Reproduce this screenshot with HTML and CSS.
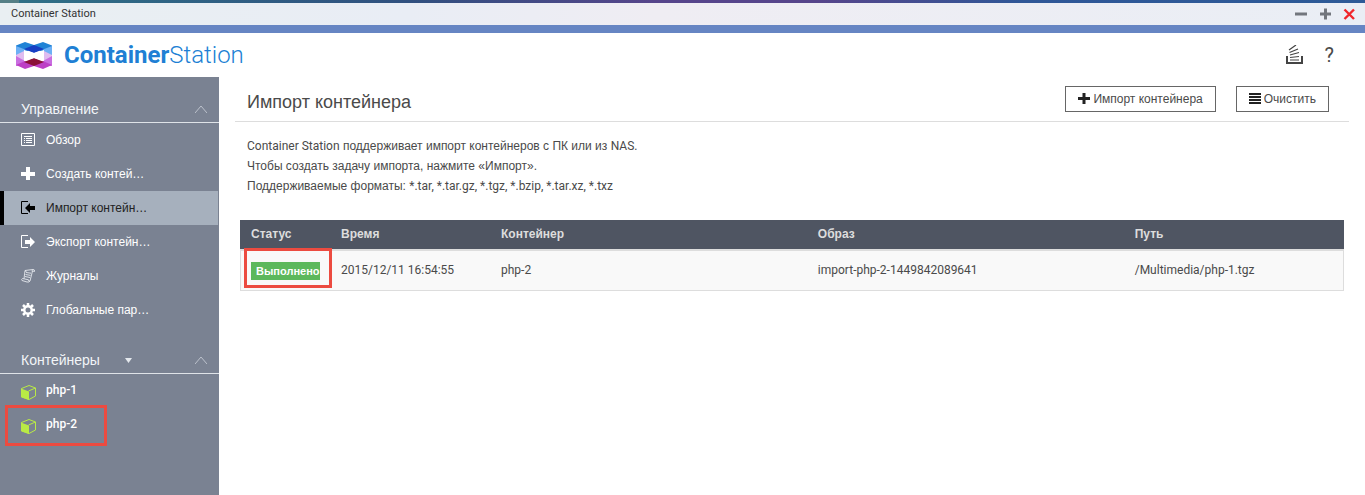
FILE: index.html
```html
<!DOCTYPE html>
<html lang="ru">
<head>
<meta charset="utf-8">
<title>Container Station</title>
<link rel="stylesheet" href="styles.css">
</head>
<body>
<div class="desktop-strip"></div>
<div class="titlebar">
  <span class="titlebar-name">Container Station</span>
  <div class="window-controls">
    <button class="icon-button" aria-label="Свернуть"><svg width="12" height="12" viewBox="0 0 12 12"><path d="M0 6h12" stroke="#72767d" stroke-width="3"/></svg></button>
    <button class="icon-button" aria-label="Развернуть"><svg width="12" height="12" viewBox="0 0 12 12"><path d="M1 6h11M6.500 .5v11" stroke="#72767d" stroke-width="3"/></svg></button>
    <button class="icon-button" aria-label="Закрыть"><svg width="12" height="12" viewBox="0 0 12 12"><path d="M1.500 1.500l9.500 9.500M11 1.500L1.500 11" stroke="#f0262b" stroke-width="2.400"/></svg></button>
  </div>
</div>
<div class="accent"></div>
<header class="app-header">
  <svg class="logo" width="36" height="27" viewBox="0 0 36 27">
    <path d="M0 3.500L9 0l9 3 9-3 9 3.500v3L27 10l-9-4-9 4-9-3.500z" fill="#1f83d6"/>
    <path d="M0 4l9 3.500v3L0 15zM36 4l-9 3.500v3l9 4.500z" fill="#6cb0f5"/>
    <path d="M8 7l10-4 10 4-10 4z" fill="#173fc4"/>
    <path d="M0 13l8-4v10l-8-4zM36 13l-8-4v10l8-4z" fill="#dfbdf0"/>
    <path d="M0 14l9 5v4l-9 1zM36 14l-9 5v4l9 1z" fill="#c96ee0"/>
    <path d="M0 23l9-4 9 4 9-4 9 4-9 4-9-3-9 3z" fill="#bd3fc6"/>
    <path d="M8 20l10-4 10 4-10 4z" fill="#8b1138"/>
    <path d="M8 8l10 3 10-3v11l-10-3-10 3z" fill="#fff"/>
  </svg>
  <div class="brand"><b>Container</b>Station</div>
  <div class="header-tools">
    <button class="icon-button" aria-label="Фоновые задачи"><svg width="18" height="21" viewBox="0 0 18 21"><path d="M1 11v7h15v-7" fill="none" stroke="#444" stroke-width="2"/><path d="M4 15h9M4 12.500l9-1M4 10l9-2.500M3.500 7.500L12 4M3 5l7-5" stroke="#444" stroke-width="1.200"/></svg></button>
    <button class="icon-button help" aria-label="Справка">?</button>
  </div>
</header>
<div class="workspace">
  <nav class="sidebar">
    <div class="section-head"><span>Управление</span><svg class="chevron" width="12" height="8" viewBox="0 0 12 8"><path d="M0 8l6-7 6 7" fill="none" stroke="#bcc2cc"/></svg></div>
    <a class="item" href="#"><svg width="14" height="14" viewBox="0 0 14 14"><path d="M.5 .5h13v12h-13z" fill="none" stroke="#fff"/><path d="M3 3.500h8M3 5.500h1M5 5.500h6M3 7.500h1M5 7.500h6M3 9.500h1M5 9.500h6" stroke="#fff"/></svg><span>Обзор</span></a>
    <a class="item" href="#"><svg width="14" height="14" viewBox="0 0 14 14"><path d="M0 7h14M7 0v13" stroke="#fff" stroke-width="4"/></svg><span>Создать контей…</span></a>
    <a class="item selected" href="#"><svg width="14" height="14" viewBox="0 0 14 14"><path d="M7 .5H.5v12H7" fill="none" stroke="#000"/><path d="M4 7l5-5v3h5v4H9v3z"/></svg><span>Импорт контейн…</span></a>
    <a class="item" href="#"><svg width="14" height="14" viewBox="0 0 14 14"><path d="M7 .5H.5v12H7" fill="none" stroke="#fff"/><path d="M14 7L9 2v3H4v4h5v3z" fill="#fff"/></svg><span>Экспорт контейн…</span></a>
    <a class="item" href="#"><svg width="14" height="14" viewBox="0 0 14 14"><path d="M4 1.500l8-1q2 0 1.500 2l-2-.5L9 12q-1 1.500-3 1L1 11.500q-1-1 .5-2l1.500.3zM3 9.800l4.500 1q0 2 1.300 1.300M5 3.500l5 .7M4.500 5.500l5 .9M4 7.500l5 1M4 1.500q1.500.5 1 1.500M12 .5q-1 .5-.8 2" fill="none" stroke="#e4e8ed" stroke-width=".9"/></svg><span>Журналы</span></a>
    <a class="item" href="#"><svg width="14" height="14" viewBox="0 0 14 14"><circle cx="7" cy="7" r="3.700" fill="none" stroke="#fff" stroke-width="2.400"/><path d="M7 0v3M7 11v3M0 7h3M11 7h3M2 2l2 2M10 10l2 2M12 2l-2 2M4 10l-2 2" stroke="#fff" stroke-width="2.500"/></svg><span>Глобальные пар…</span></a>
    <div class="section-head containers"><span>Контейнеры</span><svg class="caret" width="7" height="5" viewBox="0 0 7 5"><path d="M0 0h7L3.500 5z" fill="#e4e8ed"/></svg><svg class="chevron" width="12" height="8" viewBox="0 0 12 8"><path d="M0 8l6-7 6 7" fill="none" stroke="#bcc2cc"/></svg></div>
    <a class="item latin" href="#"><svg class="cube" width="15" height="15" viewBox="0 0 15 15"><path d="M.5 3.500L8 .5l6.500 2.500v8L8 14.500 .5 12z" fill="none" stroke="#b9ea45"/><path d="M0 3.500l8 3V15l-8-3z" fill="#b9ea45"/><path d="M7.500 6l7-3" stroke="#b9ea45"/></svg><span>php-1</span></a>
    <a class="item latin marked" href="#"><svg class="cube" width="15" height="15" viewBox="0 0 15 15"><path d="M.5 3.500L8 .5l6.500 2.500v8L8 14.500 .5 12z" fill="none" stroke="#b9ea45"/><path d="M0 3.500l8 3V15l-8-3z" fill="#b9ea45"/><path d="M7.500 6l7-3" stroke="#b9ea45"/></svg><span>php-2</span></a>
  </nav>
  <main class="content">
    <div class="page-head">
      <h1>Импорт контейнера</h1>
      <div class="actions">
        <button class="action"><svg width="12" height="12" viewBox="0 0 12 12"><path d="M0 5.500h12M6 0v11" stroke="#222" stroke-width="3"/></svg><span>Импорт контейнера</span></button>
        <button class="action"><svg width="12" height="12" viewBox="0 0 12 12"><path d="M0 1h12M0 4h12M0 7h12M0 10h12" stroke="#222" stroke-width="2"/></svg><span>Очистить</span></button>
      </div>
    </div>
    <div class="intro">
      <p><span class="latin">Container Station</span> поддерживает импорт контейнеров с ПК или из <span class="latin">NAS.</span></p>
      <p>Чтобы создать задачу импорта, нажмите «Импорт».</p>
      <p>Поддерживаемые форматы: <span class="latin">*.tar, *.tar.gz, *.tgz, *.bzip, *.tar.xz, *.txz</span></p>
    </div>
    <table class="tasks">
      <thead><tr><th class="col-status">Статус</th><th class="col-time">Время</th><th class="col-name">Контейнер</th><th class="col-name">Образ</th><th>Путь</th></tr></thead>
      <tbody><tr><td class="status-cell"><span class="badge">Выполнено</span></td><td>2015/12/11 16:54:55</td><td>php-2</td><td>import-php-2-1449842089641</td><td>/Multimedia/php-1.tgz</td></tr></tbody>
    </table>
  </main>
</div>
</body>
</html>
```
FILE: styles.css
```css
*, *::after { box-sizing: border-box; }
body {
  margin: 0;
  min-height: 100vh;
  display: flex;
  flex-direction: column;
  background: #fff;
  color: #4a4a4a;
  font: 12px/20px "Liberation Sans", Arial, sans-serif;
}
svg { display: block; flex: none; }
button { font: inherit; color: inherit; cursor: pointer; }
.latin { font-family: Roboto, sans-serif; }

.desktop-strip {
  height: 3px;
  background: linear-gradient(90deg, #557f86 0 19px, #2f7087 19px, #30507f 30%, #56458b 48%, #56458b 60%, #2f5797 75%, #2d5a97);
}
.titlebar {
  height: 22px;
  padding: 0 10px 0 11px;
  display: flex;
  align-items: center;
  justify-content: space-between;
  background: linear-gradient(90deg, #e9eff2, #e9edf5 30%, #efedf3 48%, #eaeef5);
  color: #333;
  font: 11px/24px Roboto, sans-serif;
}
.window-controls { display: flex; gap: 12px; }
.icon-button { padding: 0; border: 0; background: none; }
.accent { height: 8px; background: #6685c3; }

.app-header {
  height: 44px;
  padding: 0 31px 0 16px;
  display: flex;
  align-items: center;
}
.brand {
  margin-left: 12px;
  color: #207fd4;
  font: 300 24px/44px Roboto, sans-serif;
}
.brand b { font-weight: 700; }
.header-tools { margin-left: auto; display: flex; align-items: center; gap: 21px; }
.help { font: 20px/24px Roboto, sans-serif; }

.workspace { flex: 1; display: flex; }
.sidebar {
  flex: none;
  width: 219px;
  background: #7a8292;
}
.section-head {
  height: 46px;
  padding: 18px 12px 0 21px;
  display: flex;
  align-items: center;
  border-bottom: 1px solid #dfe3e8;
  color: #f2f5f8;
  font-size: 14px;
}
.section-head.containers { height: 47px; padding-top: 20px; }
.section-head + .item.latin { margin-top: -1px; }
.chevron { margin-left: auto; }
.caret { margin-left: 25px; }
.item {
  position: relative;
  height: 34px;
  margin-right: 1px;
  padding-left: 17px;
  border-left: 4px solid transparent;
  display: flex;
  align-items: center;
  gap: 11px;
  color: #fff;
  text-decoration: none;
}
.item.selected { background: #a6b0bd; border-left-color: #000; color: #222; }
.item.latin { gap: 10px; font-weight: 500; }
.cube { margin-top: 5px; }
.marked::after {
  content: "";
  position: absolute;
  top: -2px;
  left: 1px;
  width: 102px;
  height: 41px;
  border: 3px solid #ec4b40;
}

.content { flex: 1; min-width: 0; padding: 0 16px; }
.page-head {
  height: 45px;
  padding: 0 20px 0 12px;
  display: flex;
  align-items: center;
  justify-content: space-between;
  border-bottom: 1px solid #ddd;
}
h1 { margin: 6px 0 0; font-size: 18px; font-weight: 400; line-height: 24px; }
.actions { display: flex; gap: 20px; }
.action {
  height: 26px;
  padding: 0 12px;
  display: flex;
  align-items: center;
  gap: 3px;
  border: 1px solid #666;
  background: #fff;
}
.intro { padding: 14px 12px 24px; }
.intro p { margin: 0; }

.tasks {
  width: calc(100% - 10px);
  margin-left: 5px;
  table-layout: fixed;
  border-collapse: separate;
  border-spacing: 0;
  font-family: Roboto, sans-serif;
}
.col-status { width: 90px; }
.col-time { width: 160px; }
.col-name { width: 28.7%; }
.tasks th, .tasks td { padding: 0 11px; text-align: left; }
.tasks th {
  height: 29px;
  padding-bottom: 2px;
  background: #4f5562;
  color: #ddd;
  font-family: "Liberation Sans", Arial, sans-serif;
}
.tasks td {
  height: 42px;
  padding-bottom: 2px;
  border-top: 2px solid #ddd;
  border-bottom: 1px solid #ddd;
  background: #f9f9f9;
}
.tasks td:first-child { padding-left: 10px; border-left: 1px solid #ddd; }
.tasks td:last-child { border-right: 1px solid #ddd; }
.tasks .status-cell { position: relative; padding: 0 0 0 10px; }
.status-cell::after {
  content: "";
  position: absolute;
  top: -3px;
  left: 3px;
  width: 88px;
  height: 40px;
  border: 3px solid #ec4b40;
}
.badge {
  display: inline-block;
  padding: 0 0 0 5px;
  background: #5cb85c;
  color: #fff;
  font: 700 11px/18px "Liberation Sans", Arial, sans-serif;
}
```
